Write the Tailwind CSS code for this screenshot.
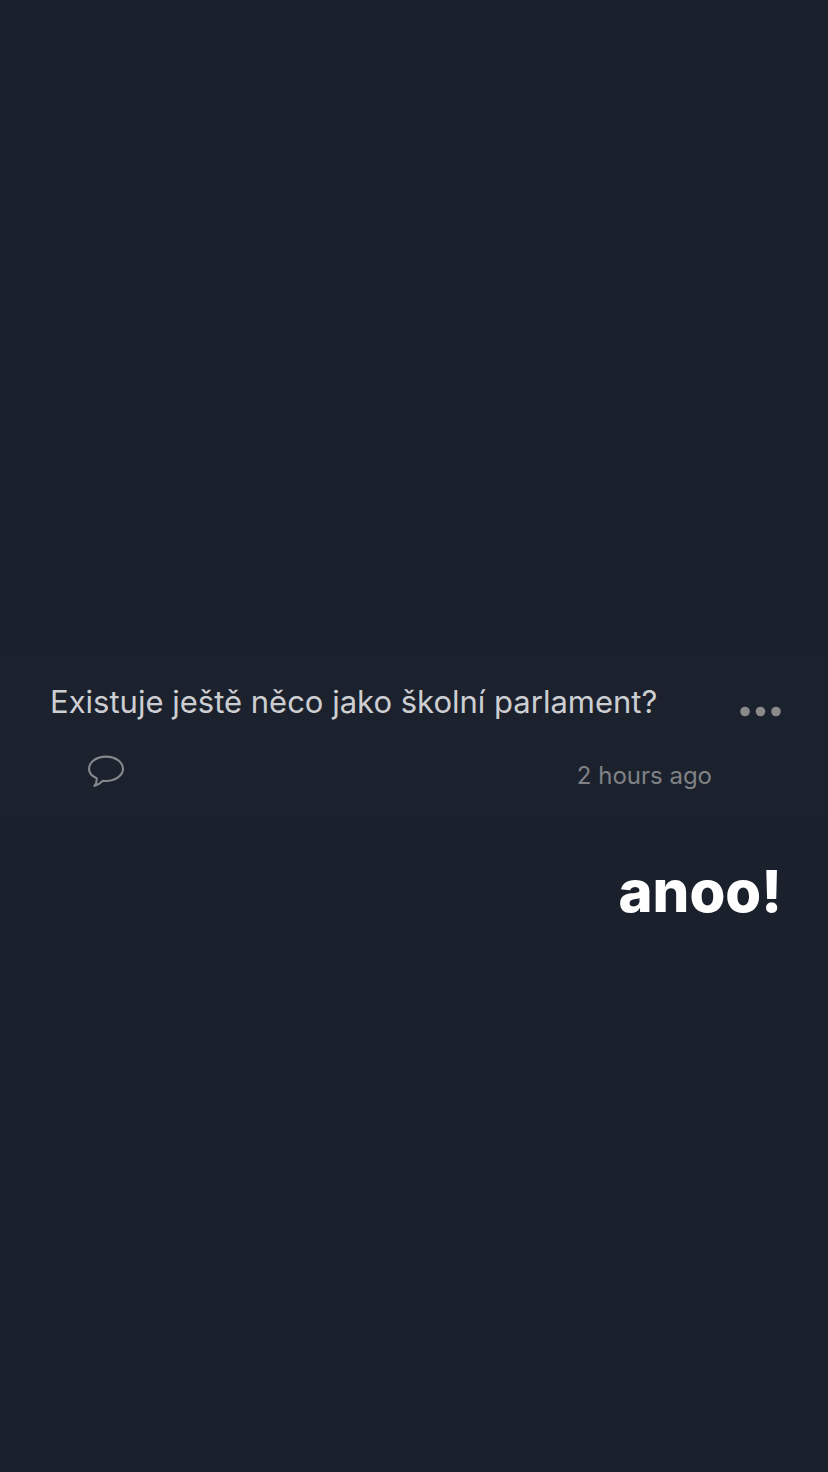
<!DOCTYPE html>
<html lang="cs">
<head>
<meta charset="utf-8">
<meta name="viewport" content="width=device-width, initial-scale=1">
<title>Existuje ještě něco jako školní parlament?</title>
<script src="https://cdn.jsdelivr.net/npm/@tailwindcss/browser@4"></script>
</head>
<body class="bg-[#1b212c] font-['Inter','Liberation_Sans',sans-serif]">
<main class="grid min-h-screen grid-rows-[1fr_auto_1fr]">
  <article class="row-start-2 bg-[#1c222d] pt-7 pb-6">
    <div class="flex items-start justify-between pl-[50px] pr-10">
      <h1 class="text-[31px] leading-9 text-[#cdced2]">Existuje ještě něco jako školní parlament?</h1>
      <button type="button" aria-label="More options" class="mt-5 flex h-4 items-center pr-1 text-[#8a8a8a]">
        <svg class="h-4 w-12" viewBox="0 0 48 16" fill="currentColor" aria-hidden="true"><circle cx="9" cy="7.5" r="4.8"/><circle cx="24.5" cy="7.5" r="4.8"/><circle cx="40" cy="7.5" r="4.8"/></svg>
      </button>
    </div>
    <div class="mt-8 flex items-start justify-between pl-[86px] pr-[116px]">
      <button type="button" aria-label="Reply" class="text-[#85888c]">
        <svg class="h-9 w-10" viewBox="0 0 40 36" fill="none" stroke="currentColor" stroke-width="2.1" stroke-linejoin="round" aria-hidden="true"><path d="M10.7 26.2C6 24.3 3 20.8 3 16.8C3 10 10.6 4.6 20 4.6S37 10 37 16.8S29.4 29 20 29C18.9 29 17.9 28.9 16.9 28.8C14.5 31.2 11.6 33.3 8.4 33.9C10.3 31.6 11 29 10.7 26.2Z"/></svg>
      </button>
      <time class="pt-2 text-[24px] leading-8 text-[#808286]">2 hours ago</time>
    </div>
  </article>
  <p class="row-start-3 px-[46px] pt-10 text-right text-[58px] leading-[70px] font-extrabold text-white">anoo!</p>
</main>
</body>
</html>
